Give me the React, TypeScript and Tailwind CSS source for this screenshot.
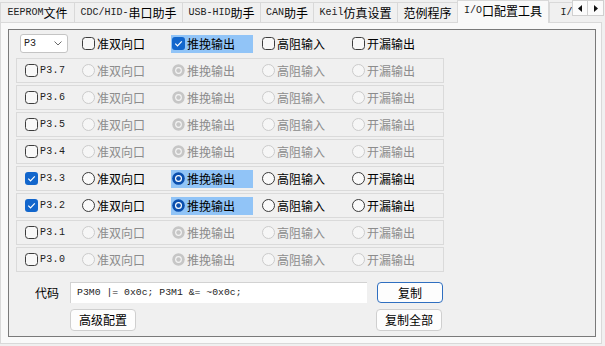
import React from "react";

const mono = "font-['Liberation_Mono',monospace] font-normal";
const cjk = "font-['Noto_Sans_CJK_SC','Noto_Sans',sans-serif]";

type Part = [string, string];
const tabs: { w: number; parts: Part[]; active?: boolean }[] = [
  { w: 74, parts: [["m", "EEPROM"], ["c", "文件"]] },
  { w: 108, parts: [["m", "CDC/HID-"], ["c", "串口助手"]] },
  { w: 78, parts: [["m", "USB-HID"], ["c", "助手"]] },
  { w: 53, parts: [["m", "CAN"], ["c", "助手"]] },
  { w: 84, parts: [["m", "Keil"], ["c", "仿真设置"]] },
  { w: 60, parts: [["c", "范例程序"]] },
  { w: 92, parts: [["m", "I/O"], ["c", "口配置工具"]], active: true },
  { w: 40, parts: [["m", "I/O"]] },
];

const modes = ["准双向口", "推挽输出", "高阻输入", "开漏输出"];

const pins = [
  { name: "P3.7", on: false },
  { name: "P3.6", on: false },
  { name: "P3.5", on: false },
  { name: "P3.4", on: false },
  { name: "P3.3", on: true },
  { name: "P3.2", on: true },
  { name: "P3.1", on: false },
  { name: "P3.0", on: false },
];

function Check({ checked }: { checked: boolean }) {
  return (
    <svg width="13" height="13" viewBox="0 0 13 13" className="shrink-0">
      {checked ? (
        <>
          <rect x="0" y="0" width="13" height="13" rx="3" fill="#1266cc" />
          <path d="M3.3 6.6 L5.5 8.8 L9.8 4.3" stroke="#fff" strokeWidth="1.2" fill="none" />
        </>
      ) : (
        <rect x="0.5" y="0.5" width="12" height="12" rx="3" fill="#f8f8f8" stroke="#3c3c3c" />
      )}
    </svg>
  );
}

function Radio({ checked, disabled }: { checked: boolean; disabled: boolean }) {
  if (disabled) {
    return (
      <svg width="13" height="13" viewBox="0 0 13 13" className="shrink-0">
        {checked ? (
          <>
            <circle cx="6.5" cy="6.5" r="6.2" fill="#c6c6c6" />
            <circle cx="6.5" cy="6.5" r="3.4" fill="#f4f4f4" />
            <circle cx="6.5" cy="6.5" r="2.2" fill="#c6c6c6" />
          </>
        ) : (
          <circle cx="6.5" cy="6.5" r="6" fill="#f6f6f6" stroke="#cacaca" />
        )}
      </svg>
    );
  }
  return (
    <svg width="13" height="13" viewBox="0 0 13 13" className="shrink-0">
      {checked ? (
        <>
          <circle cx="6.5" cy="6.5" r="6.3" fill="#0b4fae" />
          <circle cx="6.5" cy="6.5" r="3.5" fill="#ffffff" />
          <circle cx="6.5" cy="6.5" r="2.3" fill="#0b4fae" />
        </>
      ) : (
        <circle cx="6.5" cy="6.5" r="6" fill="#fafafa" stroke="#3a3a3a" />
      )}
    </svg>
  );
}

function Item({
  label,
  hl,
  gray,
  children,
}: {
  label: string;
  hl?: boolean;
  gray?: boolean;
  children: React.ReactNode;
}) {
  return (
    <div className="w-[90px] flex items-center">
      <div
        className={
          "-ml-px pl-px flex items-center gap-[2px] h-[18px] w-[82px] " +
          (hl ? "bg-[#91c4f7]" : "")
        }
      >
        {children}
        <span className={cjk + " text-[12px] leading-none " + (gray ? "text-[#8c8c8c]" : "text-black")}>
          {label}
        </span>
      </div>
    </div>
  );
}

function Button({ label, focus }: { label: string; focus?: boolean }) {
  return (
    <div
      className={
        "w-[66px] h-full rounded-[4px] bg-[#fdfdfd] flex items-center justify-center text-[12px] text-black " +
        cjk +
        (focus ? " border border-[#2f6fc0]" : " border border-[#cfcfcf]")
      }
    >
      {label}
    </div>
  );
}

export default function App() {
  return (
    <div className="w-[605px] h-[346px] bg-[#f0f0f0] overflow-hidden">
      {/* Tabs */}
      <div className="relative h-[22px] flex items-end">
        {tabs.map((t, i) => (
          <div
            key={i}
            style={{ width: t.w }}
            className={
              "shrink-0 flex items-center justify-center border-[#d9d9d9] border-t border-l text-black " +
              (t.active
                ? "h-[23px] -mb-px relative z-10 bg-[#f9f9f9] border-r pb-[3px]"
                : "h-[20px] bg-[#f0f0f0]")
            }
          >
            {t.parts.map(([k, s], j) => (
              <span
                key={j}
                className={k === "m" ? mono + " text-[10px] leading-none text-[#222]" : cjk + " text-[12px] leading-none"}
              >
                {s}
              </span>
            ))}
          </div>
        ))}
        <div className="absolute right-[1px] top-0 z-20 flex">
          <div className="w-[16px] h-[16px] bg-[#fbfbfb] border border-[#d0d0d0] flex items-center justify-center">
            <svg width="5" height="7" viewBox="0 0 5 7">
              <path d="M4 0 L0 3.5 L4 7 Z" fill="#111" />
            </svg>
          </div>
          <div className="w-[16px] h-[16px] bg-[#fbfbfb] border border-l-0 border-[#d0d0d0] flex items-center justify-center">
            <svg width="5" height="7" viewBox="0 0 5 7">
              <path d="M1 0 L5 3.5 L1 7 Z" fill="#111" />
            </svg>
          </div>
        </div>
      </div>

      {/* Tab page */}
      <div className="w-[602px] h-[322px] bg-[#f9f9f9] border border-[#d9d9d9]">
        <div className="ml-[7px] mt-[6px] w-[588px] h-[308px] border border-[#7a7a7a] bg-[#f0f0f0]">
          {/* Header row */}
          <div className="mt-[4px] h-[19px] flex items-center">
            <div className="w-[73px] pl-[11px] h-full">
              <div className="w-[48px] h-[19px] bg-white border border-[#c4c4c4] rounded-[3px] flex items-center justify-between pl-[3px] pr-[5px]">
                <span className={mono + " text-[10px] text-[#222]"}>P3</span>
                <svg width="8" height="5" viewBox="0 0 8 5">
                  <path d="M0.5 0.5 L4 4 L7.5 0.5" stroke="#6a6a6a" fill="none" />
                </svg>
              </div>
            </div>
            {modes.map((m, i) => (
              <Item key={m} label={m} hl={i === 1}>
                <Check checked={i === 1} />
              </Item>
            ))}
          </div>

          {/* Pin rows */}
          <div className="mt-[5px] ml-[7px] w-[428px] flex flex-col gap-[2px]">
            {pins.map((p) => (
              <div key={p.name} className="h-[25px] border border-[#dadada] flex items-center">
                <div className="w-[65px] pl-[8px] flex items-center gap-[2px]">
                  <Check checked={p.on} />
                  <span className={mono + " text-[10px] text-[#222] leading-none tracking-[0.3px]"}>{p.name}</span>
                </div>
                {modes.map((m, i) => (
                  <Item key={m} label={m} hl={p.on && i === 1} gray={!p.on}>
                    <Radio checked={i === 1} disabled={!p.on} />
                  </Item>
                ))}
              </div>
            ))}
          </div>

          {/* Code + buttons */}
          <div className="mt-[10px] h-[21px] flex items-center">
            <div className={cjk + " ml-[26px] w-[35px] text-[12px] text-black"}>代码</div>
            <div className="w-[297px] h-[21px] bg-white border border-[#d2d2d2] border-r-0 border-b-0 flex items-center pl-[6px]">
              <span className={mono + " text-[9.8px] text-[#222] whitespace-pre"}>P3M0 |= 0x0c; P3M1 &amp;= ~0x0c;</span>
            </div>
            <div className="ml-[10px] h-[21px]">
              <Button label="复制" focus />
            </div>
          </div>
          <div className="mt-[6px] h-[22px] flex">
            <div className="ml-[61px] h-full">
              <Button label="高级配置" />
            </div>
            <div className="ml-[240px] h-full">
              <Button label="复制全部" />
            </div>
          </div>
        </div>
      </div>
    </div>
  );
}
